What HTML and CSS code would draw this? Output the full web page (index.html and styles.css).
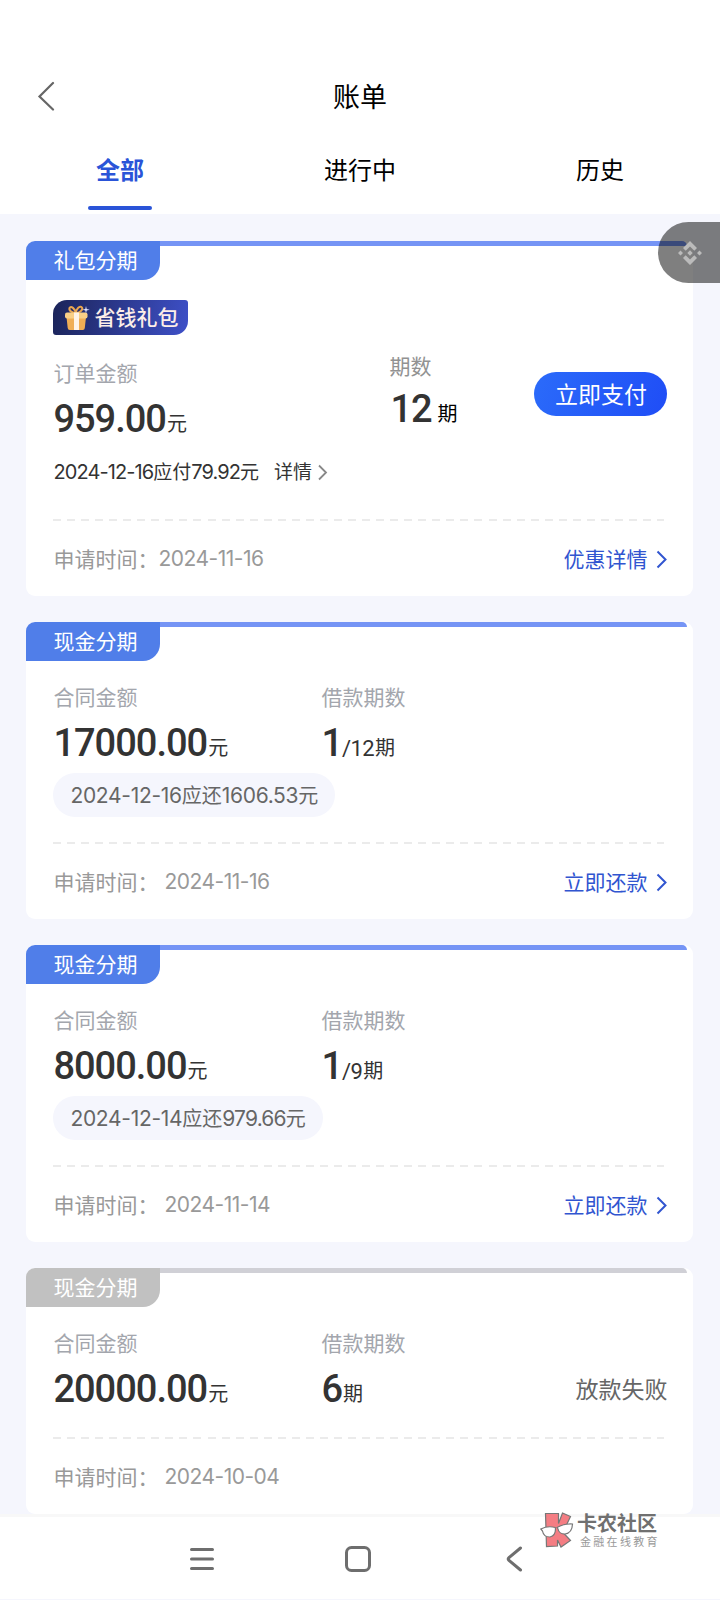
FILE: index.html
```html
<!DOCTYPE html>
<html lang="zh-CN">
<head>
    <meta charset="utf-8">
    <meta name="viewport" content="width=device-width, initial-scale=1">
    <title>账单</title>
    <link rel="stylesheet" href="styles.css">
</head>
<body>
<div class="app">
    <div class="header">
        <svg class="back" width="18" height="30" viewBox="0 0 18 30"><path d="M16 2L2.500 15.500l13.500 13"/></svg>
        <h1>账单</h1>
    </div>
    <div class="tabs">
        <div class="tab active">全部</div>
        <div class="tab">进行中</div>
        <div class="tab">历史</div>
    </div>

    <div class="list">
        <div class="card">
            <div class="top"><div class="type">礼包分期</div><div class="line"></div></div>
            <div class="gift">
                <svg width="26" height="26" viewBox="0 0 26 26">
                    <path d="M12 8C9 8 4.500 6 5.500 3 7 0 11 4 12 8zM12 8c0-4 4-8 6-5.500C19.500 5 15 8 12 8z" fill="none" stroke="#e9a650" stroke-width="2"/>
                    <path d="M2.500 12h19.500l-1.200 11q-.2 2-2 2H5.700q-1.800 0-2-2z" fill="#f0ae55"/>
                    <rect x="1" y="7.500" width="22.500" height="6" rx="2" fill="#f9cf86"/>
                    <path d="M10 7.500h5V25h-5z" fill="#fff3e6"/>
                    <path d="M22 1l.7 3 3 .7-3 .7-.7 3-.7-3-3-.7 3-.7z" fill="#dfe3ff"/>
                </svg>
                <span>省钱礼包</span>
            </div>
            <div class="row order">
                <div class="col col-order">
                    <div class="label">订单金额</div>
                    <div class="amount">959.00<span>元</span></div>
                </div>
                <div class="col col-count">
                    <div class="label dark">期数</div>
                    <div class="amount">12<span class="black">期</span></div>
                </div>
                <div class="pay">立即支付</div>
            </div>
            <div class="due"><span class="num">2024-12-16</span>应付<span class="num">79.92</span>元<span class="more">详情</span><svg width="11" height="17" viewBox="0 0 11 17"><path d="M2 1.500l7 7-7 7"/></svg></div>
            <div class="dash"></div>
            <div class="footer">
                <span>申请时间：</span><span class="date near">2024-11-16</span>
                <div class="link">优惠详情<svg width="11" height="19" viewBox="0 0 11 19"><path d="M1.500 1.500l8 8-8 8"/></svg></div>
            </div>
        </div>

        <div class="card">
            <div class="top"><div class="type">现金分期</div><div class="line"></div></div>
            <div class="row loan">
                <div class="col">
                    <div class="label">合同金额</div>
                    <div class="amount">17000.00<span>元</span></div>
                </div>
                <div class="col">
                    <div class="label">借款期数</div>
                    <div class="amount">1<small>/12</small><span>期</span></div>
                </div>
            </div>
            <div class="pill"><span class="date">2024-12-16</span>应还<span class="date">1606.53</span>元</div>
            <div class="dash"></div>
            <div class="footer">
                <span>申请时间：</span><span class="date">2024-11-16</span>
                <div class="link">立即还款<svg width="11" height="19" viewBox="0 0 11 19"><path d="M1.500 1.500l8 8-8 8"/></svg></div>
            </div>
        </div>

        <div class="card">
            <div class="top"><div class="type">现金分期</div><div class="line"></div></div>
            <div class="row loan">
                <div class="col">
                    <div class="label">合同金额</div>
                    <div class="amount">8000.00<span>元</span></div>
                </div>
                <div class="col">
                    <div class="label">借款期数</div>
                    <div class="amount">1<small>/9</small><span>期</span></div>
                </div>
            </div>
            <div class="pill"><span class="date">2024-12-14</span>应还<span class="date tight">979.66</span>元</div>
            <div class="dash"></div>
            <div class="footer">
                <span>申请时间：</span><span class="date">2024-11-14</span>
                <div class="link">立即还款<svg width="11" height="19" viewBox="0 0 11 19"><path d="M1.500 1.500l8 8-8 8"/></svg></div>
            </div>
        </div>

        <div class="card failed">
            <div class="top"><div class="type">现金分期</div><div class="line"></div></div>
            <div class="row loan">
                <div class="col">
                    <div class="label">合同金额</div>
                    <div class="amount">20000.00<span>元</span></div>
                </div>
                <div class="col">
                    <div class="label">借款期数</div>
                    <div class="amount">6<span>期</span></div>
                </div>
                <div class="status">放款失败</div>
            </div>
            <div class="dash"></div>
            <div class="footer">
                <span>申请时间：</span><span class="date">2024-10-04</span>
            </div>
        </div>
    </div>

    <div class="navbar">
        <svg width="24" height="24" viewBox="0 0 24 24"><path d="M1.500 2.500h21M1.500 12h21M1.500 21.500h21"/></svg>
        <svg width="26" height="26" viewBox="0 0 26 26"><rect x="1.500" y="1.500" width="23" height="23" rx="5"/></svg>
        <svg width="17" height="26" viewBox="0 0 17 26"><path d="M14.500 2L3 11.500q-1.500 1.500 0 3L14.500 24"/></svg>
    </div>

    <!-- floating shortcut on the right edge -->
    <div class="float">
        <svg width="24" height="26" viewBox="0 0 24 26">
            <path d="M12 1l7 7-2.700 2.700L12 6.400l-4.300 4.300L5 8zM12 25l7-7-2.700-2.700-4.300 4.300-4.300-4.300L5 18zM12 10.300l2.700 2.700-2.700 2.700L9.300 13zM2.500 10.500L5 13l-2.500 2.500L0 13zM21.500 10.500L24 13l-2.500 2.500L19 13z"/>
        </svg>
    </div>

    <div class="mark">
        <svg width="34" height="37" viewBox="0 0 34 37">
            <path d="M5.500 1.500h13v10l4-10.500 8 3.500-5 10.500-4 4 9 9.500-9.500 6.500-3.500-7v6l-11 .5z" fill="#f47d83" stroke="#777" stroke-width="1.200"/>
            <path d="M.8 17q7-3.500 14.500-1.500 1 8-5.300 9.500-6.500 0-7.500-6zM17 15.500q7-4 15.500-3.500-.3 9-7.500 10-6 0-7-5z" fill="#fff" stroke="#777" stroke-width="1.200"/>
        </svg>
        <div>
            <div class="name">卡农社区</div>
            <div class="slogan">金融在线教育</div>
        </div>
    </div>
</div>
</body>
</html>
```
FILE: styles.css
```css
*{
    margin: 0;
    padding: 0;
    box-sizing: border-box;
}
body{
    font-family: "Noto Sans CJK SC", sans-serif;
    background: #f5f6fd;
    color: #333;
}
svg{
    display: block;
    flex: none;
}
.app{
    position: relative;
    width: 720px;
    height: 1600px;
    overflow: hidden;
}
.header{
    display: flex;
    align-items: center;
    height: 132px;
    padding: 60px 37px 0;
    background: #fff;
}
.header h1{
    flex: 1;
    margin-right: 18px;
    text-align: center;
    font-size: 27px;
    line-height: 40px;
    font-weight: 400;
    color: #000;
}
.back{
    fill: none;
    stroke: #666;
    stroke-width: 2.2;
    stroke-linecap: round;
}
.tabs{
    display: flex;
    height: 82px;
    background: #fff;
}
.tab{
    display: flex;
    flex-direction: column;
    align-items: center;
    flex: 1;
    padding-top: 17px;
    font-size: 24px;
    line-height: 40px;
    color: #000;
}
.tab.active{
    color: #2a54d8;
    font-weight: 700;
}
.tab.active::after{
    content: "";
    width: 64px;
    height: 4px;
    margin-top: 17px;
    border-radius: 2px;
    background: #2a54d8;
}

.list{
    display: flex;
    flex-direction: column;
    gap: 26px;
    padding: 27px 26.6px 0 26.4px;
}
.card{
    padding: 0 26px 0 27px;
    border-radius: 9px;
    background: #fff;
}
.top{
    display: flex;
    height: 39px;
    margin: 0 -20px 0 -27px;
}
.type{
    width: 134px;
    padding-left: 27px;
    border-radius: 9px 0 17px 0;
    background: #507ee9;
    font-size: 21px;
    line-height: 36px;
    color: #fff;
}
.line{
    flex: 1;
    height: 5px;
    border-radius: 0 5px 0 0;
    background: #7594f5;
}
.failed .type{
    background: #c1c1c1;
}
.failed .line{
    background: #d0d0d6;
}

.gift{
    display: flex;
    align-items: center;
    width: 135px;
    height: 35px;
    margin-top: 20px;
    padding-left: 11px;
    gap: 4px;
    border-radius: 14px 3px 14px 3px;
    background: linear-gradient(100deg, #1b2459, #3e50c8);
    color: #fdeee8;
    font-size: 21px;
    line-height: 32px;
    font-weight: 500;
}
.gift span{
    margin-top: -4px;
}
.row{
    display: flex;
}
.col{
    flex: none;
}
.col-order{
    width: 336px;
    padding-top: 22px;
}
.col-count{
    padding-top: 15px;
}
.loan{
    padding-top: 20px;
}
.loan .col:first-child{
    width: 268px;
}
.label{
    font-size: 21px;
    line-height: 30px;
    color: #a3a6ad;
}
.label.dark{
    color: #929292;
}
.amount{
    height: 46px;
    margin-top: 9px;
    font-family: Roboto, sans-serif;
    font-size: 38px;
    line-height: 46px;
    font-weight: 500;
    letter-spacing: -1px;
    white-space: nowrap;
}
.col-count .amount{
    margin-top: 6px;
    padding-left: 1px;
}
.amount span{
    margin-left: 1px;
    vertical-align: 1px;
    font-family: "Noto Sans CJK SC", sans-serif;
    font-size: 20px;
    line-height: 20px;
    font-weight: 400;
    letter-spacing: 0;
}
.amount .black{
    margin-left: 6px;
    color: #000;
}
.amount small{
    font-size: 22px;
    line-height: 20px;
    font-weight: 400;
    letter-spacing: -0.6px;
}
.pay{
    width: 133px;
    height: 44px;
    margin: 37px 0 0 auto;
    border-radius: 22px;
    background: linear-gradient(110deg, #2b6bfa, #1f4df6);
    text-align: center;
    font-size: 23px;
    line-height: 42px;
    color: #fff;
}
.status{
    margin: 44px 0 0 auto;
    font-size: 23px;
    line-height: 34px;
    white-space: nowrap;
    color: #666;
}
.date, .num{
    position: relative;
    top: 1px;
    font-family: Inter, sans-serif;
    font-size: 21px;
    letter-spacing: -0.5px;
}
.due{
    display: flex;
    align-items: center;
    height: 26px;
    margin-top: 16px;
    font-size: 19px;
    line-height: 26px;
}
.due .num{
    font-size: 20px;
    letter-spacing: -0.9px;
}
.more{
    margin-left: 15px;
}
.due svg{
    margin: 2px 0 0 5px;
    fill: none;
    stroke: #888;
    stroke-width: 1.8;
}
.pill{
    width: fit-content;
    height: 44px;
    margin-top: 7px;
    padding: 0 17px;
    border-radius: 22px;
    background: #f5f6fd;
    font-size: 20px;
    line-height: 43px;
    color: #666;
}
.pill .date{
    top: 0;
    letter-spacing: -0.3px;
}
.pill .tight{
    letter-spacing: -0.8px;
}
.dash{
    width: 611px;
    height: 2px;
    margin-top: 25px;
    background: repeating-linear-gradient(90deg, #ebebeb 0 8px, transparent 8px 14.05px);
}
.due + .dash{
    margin-top: 35px;
}
.footer{
    display: flex;
    align-items: center;
    height: 75px;
    padding-bottom: 2px;
    font-size: 21px;
    line-height: 30px;
    color: #999;
}
.footer .date{
    margin-left: 6px;
}
.footer .near{
    margin-left: 0;
}
.link{
    display: flex;
    align-items: center;
    gap: 9px;
    margin-left: auto;
    color: #3155d0;
}
.link svg{
    margin-top: 3px;
    fill: none;
    stroke: #3155d0;
    stroke-width: 2;
}

.navbar{
    display: flex;
    align-items: center;
    height: 85px;
    padding: 1px 0 0 190px;
    border-top: 3px solid #f8f8f8;
    background: #fff;
}
.navbar svg{
    fill: none;
    stroke: #6e6e6e;
    stroke-width: 3;
    stroke-linecap: round;
}
.navbar svg:nth-child(2){
    margin-left: 131px;
}
.navbar svg:nth-child(3){
    margin-left: 135px;
}

.float{
    position: absolute;
    top: 222px;
    right: 0;
    width: 62px;
    height: 61px;
    padding: 18px 0 0 20px;
    border-radius: 31px 0 0 31px;
    background: rgba(0, 0, 0, 0.5);
}
.float svg{
    fill: #bbb;
}
.mark{
    position: absolute;
    left: 540px;
    top: 1512px;
    display: flex;
    gap: 3px;
    color: #707070;
}
.name{
    font-size: 20px;
    line-height: 22px;
    font-weight: 700;
    white-space: nowrap;
}
.slogan{
    padding-left: 3px;
    font-size: 11px;
    line-height: 14px;
    letter-spacing: 2.3px;
    white-space: nowrap;
    color: #999;
}
```
